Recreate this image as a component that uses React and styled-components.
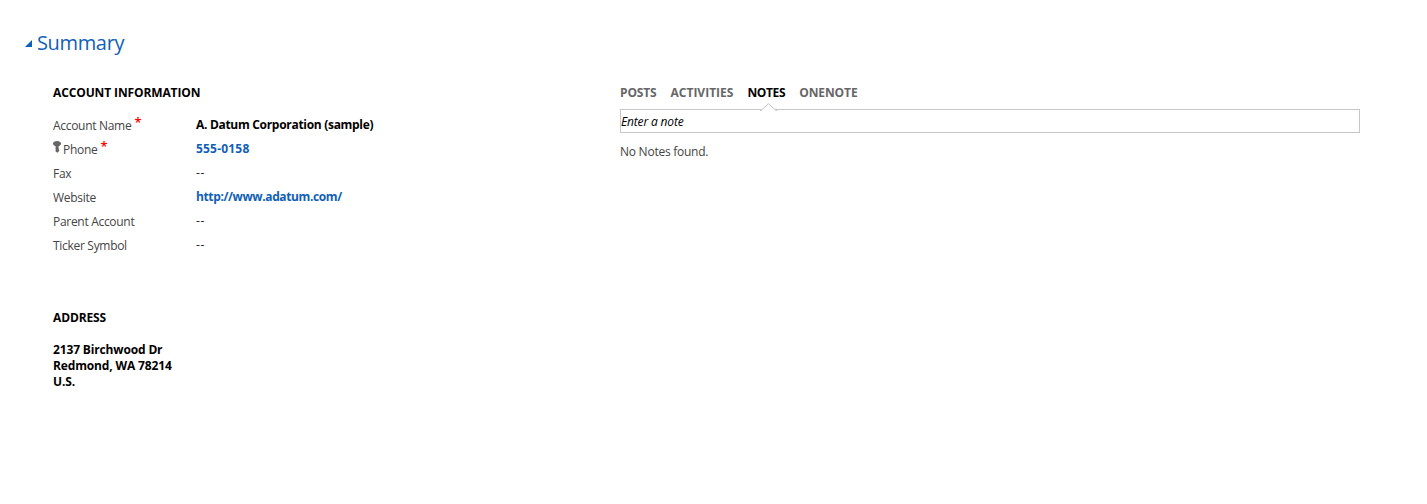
import React from "react";
import styled, { createGlobalStyle } from "styled-components";

const Global = createGlobalStyle`
  html, body { margin: 0; padding: 0; background: #fff; }
  body { font-family: "Open Sans", "Noto Sans", "Liberation Sans", sans-serif; font-size: 12px; color: #444; }
`;

const Page = styled.div`
  width: 1427px;
  height: 504px;
  padding-top: 29px;
  box-sizing: border-box;
  overflow: hidden;
`;
const SummaryHeader = styled.div`
  display: flex;
  align-items: center;
  height: 28px;
  padding-left: 25px;
  gap: 5px;
`;
const Caret = styled.svg`
  width: 7px;
  height: 7px;
  flex: none;
`;
const SummaryTitle = styled.h2`
  margin: 0;
  font-size: 20px;
  font-weight: 400;
  line-height: 28px;
  color: #1160b7;
  letter-spacing: -0.35px;
`;
const Columns = styled.div`
  display: grid;
  grid-template-columns: 620px 740px;
  margin-top: 28px;
`;
const LeftColumn = styled.div`
  padding-left: 53px;
  display: flex;
  flex-direction: column;
`;
const RightColumn = styled.div`
  display: flex;
  flex-direction: column;
`;
const SectionHeading = styled.h3`
  margin: 0;
  font-size: 12px;
  line-height: 16px;
  font-weight: 700;
  color: #000;
  letter-spacing: -0.12px;
`;
const Fields = styled.div`
  margin-top: 12px;
  display: flex;
  flex-direction: column;
`;
const Row = styled.div`
  display: grid;
  grid-template-columns: 143px 1fr;
  height: 24px;
  align-items: center;
`;
const Label = styled.span`
  display: flex;
  align-items: center;
  color: #444;
  line-height: 16px;
  padding-top: 2px;
  letter-spacing: -0.3px;
  white-space: nowrap;
`;
const Required = styled.span`
  color: #f00;
  font-size: 13px;
  font-weight: 600;
  line-height: 10px;
  margin-left: 3px;
  position: relative;
  top: -4px;
`;
const KeyIcon = styled.svg`
  width: 8px;
  height: 12px;
  margin-right: 2px;
  position: relative;
  top: -3px;
`;
const Value = styled.span`
  font-weight: 700;
  line-height: 16px;
  letter-spacing: ${(p) => p.$track}px;
  color: ${(p) => (p.$link ? "#1160b7" : "#000")};
  white-space: nowrap;
`;
const Empty = styled.span`
  color: #222;
  line-height: 16px;
  letter-spacing: 0.6px;
`;
const AddressSection = styled.div`
  margin-top: 53px;
`;
const AddressLines = styled.div`
  margin-top: 16px;
  font-weight: 700;
  line-height: 16px;
  color: #000;
  letter-spacing: -0.15px;
`;
const Tabs = styled.div`
  display: flex;
  gap: 14px;
  height: 16px;
`;
const Tab = styled.span`
  font-size: 12px;
  font-weight: 700;
  line-height: 16px;
  letter-spacing: ${(p) => p.$track}px;
  color: ${(p) => (p.$active ? "#000" : "#666")};
`;
const NoteBox = styled.div`
  position: relative;
  margin-top: 8px;
  height: 24px;
  box-sizing: border-box;
  border: 1px solid #c6c6c6;
  display: flex;
  align-items: center;
  font-style: italic;
  color: #000;
  letter-spacing: -0.15px;
`;
const Notch = styled.svg`
  position: absolute;
  left: 139px;
  top: -7px;
  width: 17px;
  height: 8px;
`;
const NoNotes = styled.div`
  margin-top: 11px;
  line-height: 16px;
  color: #444;
  letter-spacing: -0.25px;
`;

const fields = [
  { label: "Account Name", required: true, value: "A. Datum Corporation (sample)", track: -0.3 },
  { label: "Phone", required: true, hasKey: true, value: "555-0158", link: true, track: 0.2 },
  { label: "Fax" },
  { label: "Website", value: "http://www.adatum.com/", link: true, track: -0.38 },
  { label: "Parent Account" },
  { label: "Ticker Symbol" },
];

const tabs = [
  { name: "POSTS", track: -0.15 },
  { name: "ACTIVITIES", track: 0 },
  { name: "NOTES", track: -0.35, active: true },
  { name: "ONENOTE", track: -0.1 },
];

export default function App() {
  return (
    <Page>
      <Global />
      <SummaryHeader>
        <Caret viewBox="0 0 7 7"><path d="M7 0V7H0Z" fill="#1160b7" /></Caret>
        <SummaryTitle>Summary</SummaryTitle>
      </SummaryHeader>
      <Columns>
        <LeftColumn>
          <SectionHeading>ACCOUNT INFORMATION</SectionHeading>
          <Fields>
            {fields.map((f) => (
              <Row key={f.label}>
                <Label>
                  {f.hasKey && (
                    <KeyIcon viewBox="0 0 8 12">
                      <path d="M0 2.6C0 .9 1.8 0 4 0S8 .9 8 2.6 6.8 4.8 5.6 5.2V7.5L6.4 8.3 5.6 9 6.4 9.8 4.4 11.8 2.6 10.6V5.2C1.2 4.8 0 4.3 0 2.6Z" fill="#666" />
                    </KeyIcon>
                  )}
                  {f.label}
                  {f.required && <Required>*</Required>}
                </Label>
                {f.value ? <Value $link={f.link} $track={f.track}>{f.value}</Value> : <Empty>--</Empty>}
              </Row>
            ))}
          </Fields>
          <AddressSection>
            <SectionHeading>ADDRESS</SectionHeading>
            <AddressLines>
              2137 Birchwood Dr<br />Redmond, WA 78214<br />U.S.
            </AddressLines>
          </AddressSection>
        </LeftColumn>
        <RightColumn>
          <Tabs>
            {tabs.map((t) => (
              <Tab key={t.name} $active={t.active} $track={t.track}>{t.name}</Tab>
            ))}
          </Tabs>
          <NoteBox>
            <Notch viewBox="0 0 17 8"><path d="M0 7.5H1L8.5 .7 16 7.5H17" fill="#fff" stroke="#c6c6c6" /></Notch>
            Enter a note
          </NoteBox>
          <NoNotes>No Notes found.</NoNotes>
        </RightColumn>
      </Columns>
    </Page>
  );
}
